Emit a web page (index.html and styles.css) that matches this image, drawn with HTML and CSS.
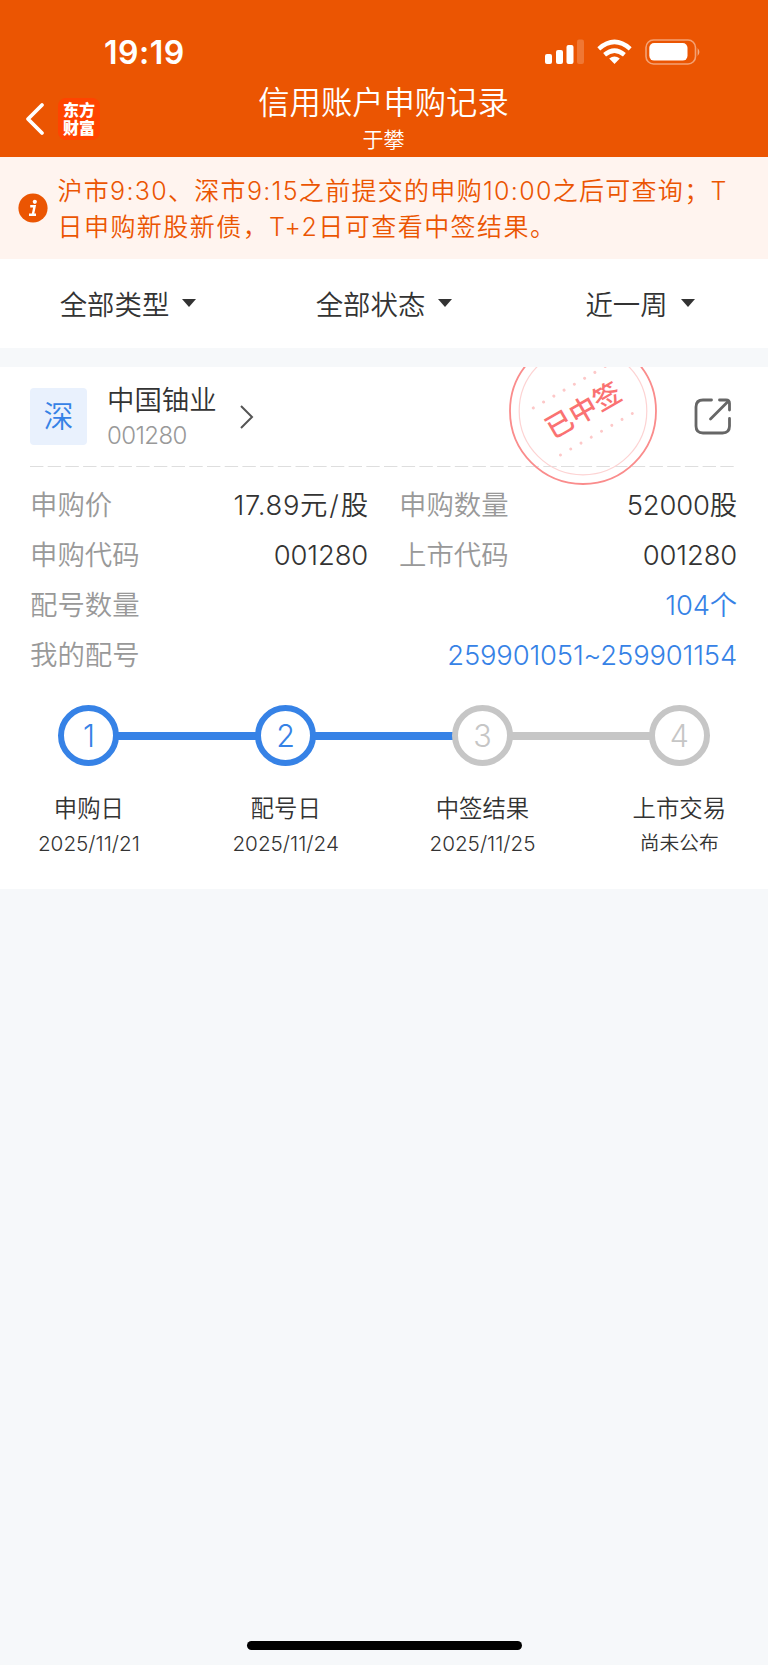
FILE: index.html
```html
<!DOCTYPE html>
<html lang="zh-CN">
<head>
    <meta charset="UTF-8">
    <meta name="viewport" content="width=device-width, initial-scale=1.0">
    <title>信用账户申购记录</title>
    <link rel="stylesheet" href="styles.css">
</head>
<body>
    <header class="header">
        <div class="status-bar">
            <span class="time">19:19</span>
            <svg class="status-icons" width="160" height="30" viewBox="0 0 160 30">
                <g fill="#fff">
                    <rect x="1" y="17" width="7" height="10" rx="2"/>
                    <rect x="12" y="13" width="7" height="14" rx="2"/>
                    <rect x="22.5" y="8" width="7" height="19" rx="2"/>
                    <rect x="33" y="2.5" width="7" height="24.5" rx="2" opacity="0.2"/>
                    <path d="M70.5 27 L65.2 21.6 Q70.5 17.4 75.8 21.6 Z"/>
                </g>
                <g fill="none" stroke="#fff" stroke-width="4.4">
                    <path d="M60.6 17.8 Q70.5 9.4 80.4 17.8"/>
                    <path d="M54.8 11.8 Q70.5 -2 86.2 11.8"/>
                </g>
                <rect x="102" y="3" width="49.5" height="24" rx="7.5" fill="none" stroke="#fff" stroke-width="1.6" opacity="0.45"/>
                <rect x="105.3" y="6" width="38.2" height="17.6" rx="4.8" fill="#fff"/>
                <path d="M153.6 11 Q157.2 15 153.6 19 Z" fill="#fff" opacity="0.5"/>
            </svg>
        </div>
        <div class="nav">
            <div class="nav-left">
                <svg width="20" height="34" viewBox="0 0 20 34">
                    <path d="M17 3 L3 17 L17 31" fill="none" stroke="#fff" stroke-width="3.8" stroke-linecap="round" stroke-linejoin="round"/>
                </svg>
                <div class="logo">东方<br>财富</div>
            </div>
            <div class="nav-title">
                <h1>信用账户申购记录</h1>
                <p>于攀</p>
            </div>
            <div class="nav-right"></div>
        </div>
    </header>

    <div class="notice">
        <svg class="notice-icon" width="30" height="30" viewBox="0 0 30 30">
            <circle cx="15" cy="15" r="14.6" fill="#eb5502"/>
            <circle cx="16.8" cy="8.8" r="2.1" fill="#fff"/>
            <path d="M12.2 13.2 H16.6 L14.9 21.6 M11 21.8 H18" fill="none" stroke="#fff" stroke-width="2.4"/>
        </svg>
        <p class="notice-text">沪市9:30、深市9:15之前提交的申购10:00之后可查询；T<br><span class="line2">日申购新股新债，T+2日可查看中签结果。</span></p>
    </div>

    <div class="filters">
        <div class="filter">全部类型<i class="caret"></i></div>
        <div class="filter">全部状态<i class="caret"></i></div>
        <div class="filter">近一周<i class="caret"></i></div>
    </div>

    <main class="card">
        <div class="card-head">
            <div class="market">深</div>
            <div class="stock">
                <div class="stock-name">中国铀业</div>
                <div class="stock-code">001280</div>
            </div>
            <svg class="arrow" width="16" height="26" viewBox="0 0 16 26">
                <path d="M2 2 L13 13 L2 24" fill="none" stroke="#555" stroke-width="2"/>
            </svg>
            <svg class="share" width="40" height="40" viewBox="0 0 40 40">
                <g fill="none" stroke="#666" stroke-width="2.8" stroke-linecap="round" stroke-linejoin="round">
                    <path d="M18.5 3 H10 Q3 3 3 10 V29 Q3 36 10 36 H29.5 Q36.5 36 36.5 29 V21.5"/>
                    <path d="M26.5 3 H33 Q36.5 3 36.5 6.5 V13"/>
                    <path d="M17.5 22 L35 4.5"/>
                </g>
            </svg>
        </div>
        <svg class="divider" width="708" height="2" viewBox="0 0 708 2">
            <path d="M0 0.5 H704" stroke="#dedede" stroke-width="1" stroke-dasharray="13.4 4.3"/>
        </svg>

        <div class="info">
            <div class="cell"><span class="label">申购价</span><span class="value"><span class="price">17.89</span>元<span class="slash">/</span>股</span></div>
            <div class="cell"><span class="label">申购数量</span><span class="value">52000股</span></div>
            <div class="cell"><span class="label">申购代码</span><span class="value">001280</span></div>
            <div class="cell"><span class="label">上市代码</span><span class="value">001280</span></div>
            <div class="cell wide"><span class="label">配号数量</span><span class="value link">104个</span></div>
            <div class="cell wide"><span class="label">我的配号</span><span class="value link">259901051~259901154</span></div>
        </div>

        <div class="steps">
            <div class="step done">
                <div class="circle">1</div>
                <div class="step-name">申购日</div>
                <div class="step-date">2025/11/21</div>
            </div>
            <div class="step done">
                <div class="circle">2</div>
                <div class="step-name">配号日</div>
                <div class="step-date">2025/11/24</div>
            </div>
            <div class="step">
                <div class="circle">3</div>
                <div class="step-name">中签结果</div>
                <div class="step-date">2025/11/25</div>
            </div>
            <div class="step">
                <div class="circle">4</div>
                <div class="step-name">上市交易</div>
                <div class="step-date cn">尚未公布</div>
            </div>
        </div>

        <svg class="stamp" width="150" height="150" viewBox="-75 -75 150 150">
            <circle r="73" fill="none" stroke="#fa8c8c" stroke-width="1.8"/>
            <circle r="63.8" fill="none" stroke="#fdd3d3" stroke-width="1.2"/>
            <g transform="rotate(-30)">
                <path d="M-41.5 -27.5 H43" class="dots"/>
                <path d="M-41.5 26.8 H43" class="dots"/>
                <text x="0.5" y="9.5" text-anchor="middle" class="stamp-text">已中签</text>
            </g>
        </svg>
    </main>

    <div class="home-bar"></div>
</body>
</html>
```
FILE: styles.css
```css
* {
    box-sizing: border-box;
    margin: 0;
    padding: 0;
}
body {
    display: flex;
    flex-direction: column;
    min-height: 1665px;
    font-family: Inter, "Noto Sans CJK SC", sans-serif;
    font-weight: 350;
    font-size: 27.4px;
    color: #333;
    background-color: #f6f8fa;
}
svg {
    display: block;
    flex: none;
}

/* header */
.header {
    height: 157px;
    background-color: #eb5502;
    color: #fff;
}
.status-bar {
    display: flex;
    justify-content: space-between;
    align-items: center;
    height: 83px;
    padding: 22px 64px 0 104px;
}
.time {
    font-size: 32px;
    font-weight: 600;
    letter-spacing: 0.5px;
}
.status-icons {
    margin-bottom: 1px;
}
.nav {
    display: flex;
    height: 74px;
}
.nav-left, .nav-right {
    width: 200px;
}
.nav-left {
    display: flex;
    align-items: center;
    padding: 0 0 2px 25px;
}
.logo {
    width: 42px;
    height: 42px;
    margin-left: 13px;
    padding-top: 3px;
    border-radius: 8px;
    background-color: #ff4400;
    font-size: 16px;
    font-weight: 900;
    line-height: 18px;
    text-align: center;
}
.nav-title {
    flex: 1;
    margin-left: -1px;
    text-align: center;
}
.nav-title h1 {
    font-size: 31.3px;
    font-weight: 350;
    line-height: 40px;
}
.nav-title p {
    font-size: 21px;
    line-height: 34px;
}

/* notice */
.notice {
    display: flex;
    height: 102px;
    padding-top: 16px;
    background-color: #fff4ef;
    color: #eb5502;
}
.notice-icon {
    margin: 20px 9.5px 0 18px;
}
.notice-text {
    font-size: 25px;
    line-height: 36px;
    letter-spacing: 1.3px;
    white-space: nowrap;
}
.line2 {
    letter-spacing: 1.45px;
}

/* filters */
.filters {
    display: grid;
    grid-template-columns: repeat(3, 1fr);
    height: 89px;
    padding-bottom: 2px;
    background-color: #fff;
}
.filter {
    display: flex;
    justify-content: center;
    align-items: center;
}
.caret {
    margin: 1px 0 0 13px;
    border: 7px solid transparent;
    border-top: 8px solid #333;
    border-bottom: 0;
}

/* record card */
.card {
    position: relative;
    height: 522px;
    margin-top: 19px;
    padding: 0 31px 0 30px;
    overflow: hidden;
    background-color: #fff;
}
.card-head {
    display: flex;
    align-items: center;
    height: 99px;
}
.market {
    width: 57px;
    height: 57px;
    border-radius: 4px;
    background-color: #e9f1fd;
    color: #3682e6;
    font-size: 30px;
    line-height: 57px;
    text-align: center;
}
.stock {
    width: 132px;
    margin-left: 20px;
    padding-top: 3px;
}
.stock-name {
    line-height: 35px;
}
.stock-code {
    font-size: 24px;
    font-weight: 300;
    line-height: 36px;
    letter-spacing: -0.6px;
    color: #999;
}
.share {
    margin-left: auto;
    margin-right: 4px;
}
.info {
    display: grid;
    grid-template-columns: 338px 338px;
    column-gap: 31px;
    padding-top: 12px;
}
.cell {
    display: flex;
    justify-content: space-between;
    line-height: 50px;
}
.wide {
    grid-column: span 2;
}
.label {
    color: #999;
}
.value {
    letter-spacing: -0.15px;
}
.price {
    letter-spacing: 0.7px;
}
.slash {
    margin: 0 2px;
}
.link {
    color: #3682e6;
}

/* progress */
.steps {
    display: grid;
    grid-template-columns: repeat(4, 196.8px);
    margin: 25px 0 0 -39.5px;
}
.step {
    position: relative;
    text-align: center;
}
.circle {
    width: 61px;
    height: 61px;
    margin: 0 auto;
    border: 6px solid #c6c6c6;
    border-radius: 50%;
    color: #c6c6c6;
    font-size: 30.5px;
    font-weight: 300;
    line-height: 49px;
}
.done .circle {
    border-color: #3682e6;
    color: #3682e6;
}
.step:not(:last-child)::after {
    content: "";
    position: absolute;
    top: 27px;
    left: calc(50% + 29px);
    width: 139px;
    height: 8px;
    background-color: #c6c6c6;
}
.step.done::after {
    background-color: #3682e6;
}
.step-name {
    margin-top: 25px;
    font-size: 23.4px;
    line-height: 36px;
}
.step-date {
    font-size: 20.7px;
    line-height: 33px;
}
.step-date.cn {
    font-size: 19.8px;
}

/* stamp */
.stamp {
    position: absolute;
    top: -31px;
    left: 508px;
}
.stamp-text {
    fill: #fa7272;
    font-size: 27.5px;
    font-weight: 500;
}
.dots {
    stroke: #fdc8c8;
    stroke-width: 3;
    stroke-linecap: round;
    stroke-dasharray: 0 11.85;
}

.home-bar {
    width: 275px;
    height: 9px;
    margin: auto auto 15px;
    border-radius: 5px;
    background-color: #000;
}
```
